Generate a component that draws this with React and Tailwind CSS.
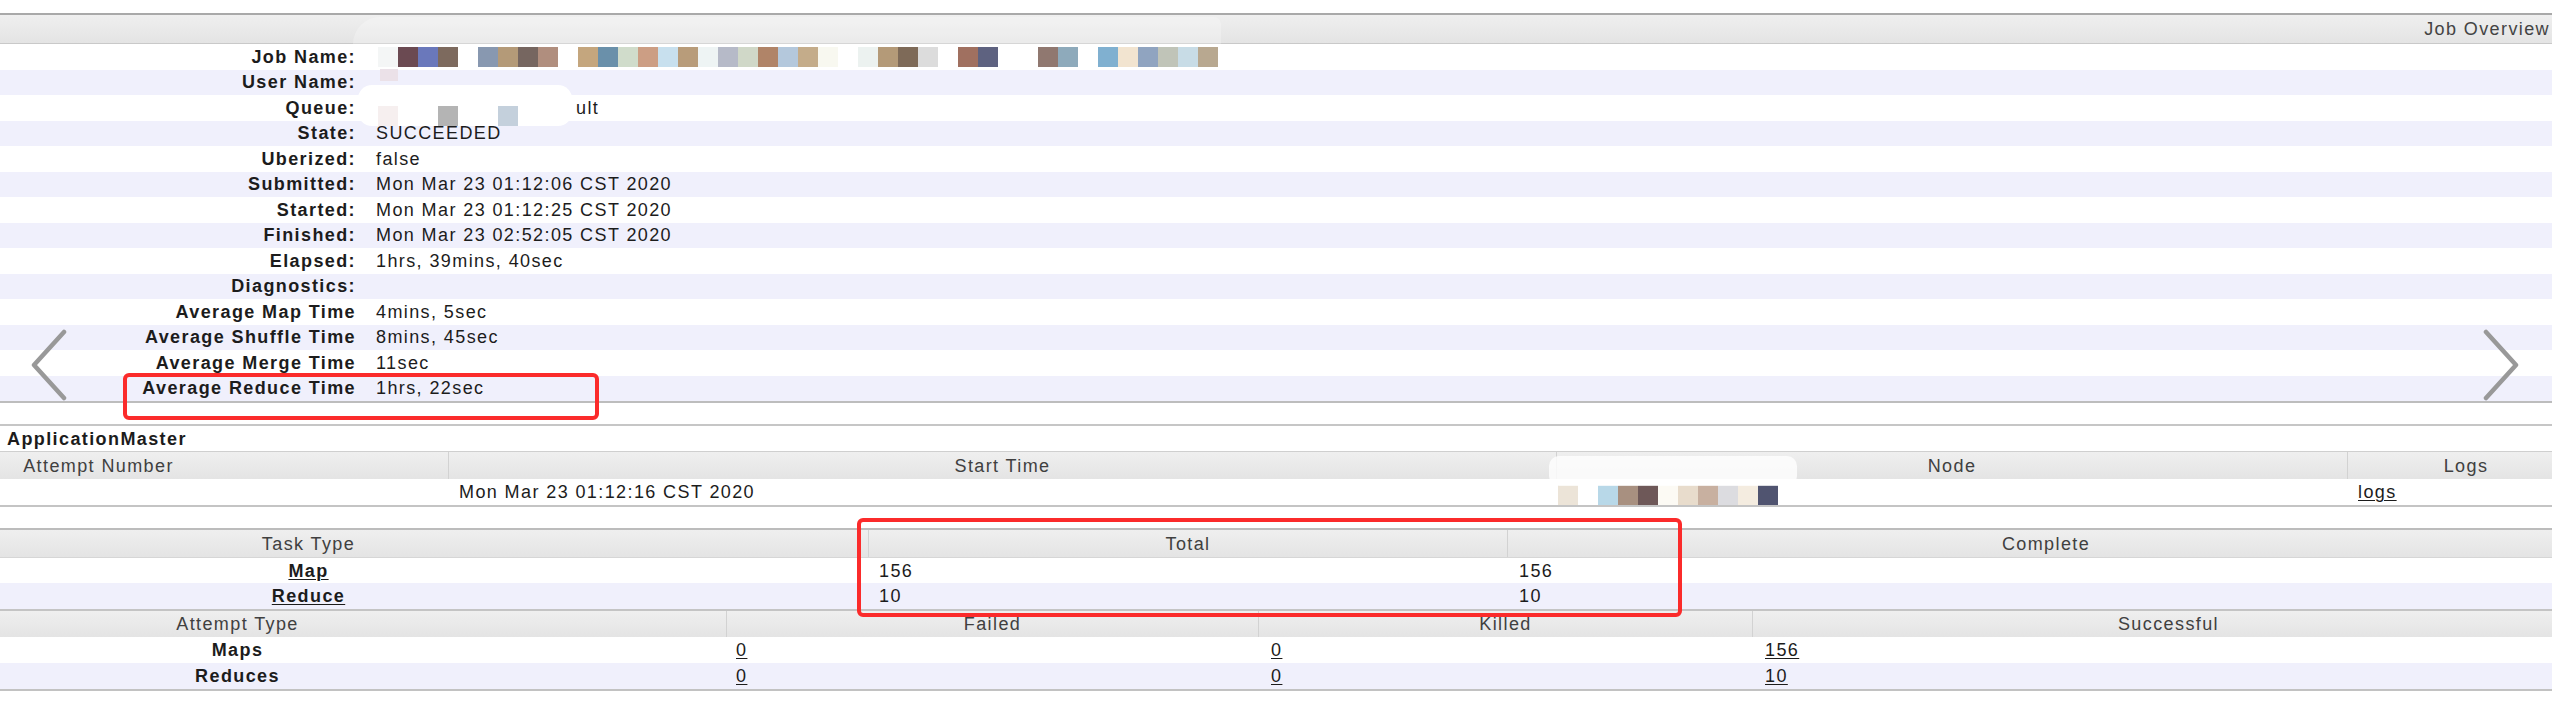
import React from "react"

const overview = [
  ["Job Name:", "job"],
  ["User Name:", ""],
  ["Queue:", "queue"],
  ["State:", "SUCCEEDED"],
  ["Uberized:", "false"],
  ["Submitted:", "Mon Mar 23 01:12:06 CST 2020"],
  ["Started:", "Mon Mar 23 01:12:25 CST 2020"],
  ["Finished:", "Mon Mar 23 02:52:05 CST 2020"],
  ["Elapsed:", "1hrs, 39mins, 40sec"],
  ["Diagnostics:", ""],
  ["Average Map Time", "4mins, 5sec"],
  ["Average Shuffle Time", "8mins, 45sec"],
  ["Average Merge Time", "11sec"],
  ["Average Reduce Time", "1hrs, 22sec"],
]

// pixelated (redacted) job name
const jobBlocks = [
  "#f4f6f6", "#6b4a52", "#6a78bb", "#7d6a5e", "#ffffff", "#8898b0", "#b49a78", "#766660",
  "#b08e7e", "#ffffff", "#c4a67e", "#6a90aa", "#d0dccb", "#cc9e84", "#c8e0ee", "#b89c7a",
  "#eef4f4", "#b6bac8", "#d0d8c8", "#b08468", "#b4c8dc", "#c4ac8a", "#f8f8f0", "#ffffff",
  "#ecf2f0", "#b49a78", "#7e6a58", "#dcdcdc", "#ffffff", "#a07060", "#5e6280", "#ffffff",
  "#ffffff", "#907870", "#8eaabb", "#ffffff", "#80b0d0", "#f2e4d0", "#90a4c0", "#c0c4b8",
  "#c8dce6", "#b8a890",
]

const nodeBlocks = [
  "#ece4d8", "#ffffff", "#b8d8e8", "#a89080", "#6e5858", "#fcfaf4", "#e8dccc", "#c8b0a0",
  "#dcdce0", "#f4ece0", "#505470",
]

const Blocks = ({ colors }) => (
  <div className="flex">
    {colors.map((c, i) => (
      <div key={i} className="w-[20px] h-[20px]" style={{ backgroundColor: c }} />
    ))}
  </div>
)

const HeadCell = ({ children }) => (
  <div className="flex items-center justify-center border-l border-[#d2d2d2] first:border-l-0">
    {children}
  </div>
)

const Link = ({ children, bold }) => (
  <span className={`underline underline-offset-2 decoration-1 ${bold ? "font-bold" : ""}`}>{children}</span>
)

const Chevron = ({ left }) => (
  <svg width="40" height="74" viewBox="0 0 40 74" fill="none" stroke="#999999" strokeWidth="4.5" strokeLinecap="round" strokeLinejoin="round">
    {left ? <polyline points="34,3 4,36 34,69" /> : <polyline points="6,3 36,36 6,69" />}
  </svg>
)

export default function App() {
  return (
    <div className="relative w-[2552px] h-[728px] overflow-hidden bg-white text-[18px] leading-[22px] tracking-[1.4px] text-[#1c1c1c] font-['Liberation_Sans',Arial,sans-serif]">
      <div className="ml-[-251px] w-[2835px] pt-[13px]">
        {/* Job Overview */}
        <div className="border-b-2 border-[#bdbdbd]">
          <div className="h-[31px] border-t-2 border-t-[#a9a9a9] border-b border-b-[#c9c9c9] bg-linear-to-b from-[#efefef] to-[#e4e4e4] flex items-center justify-end pr-[34px] text-[#444]">
            Job Overview
          </div>
          {overview.map(([label, value], i) => (
            <div key={label} className={`flex h-[25.5px] items-center ${i % 2 ? "bg-[#f0f0fc]" : "bg-white"}`}>
              <div className="w-[613px] shrink-0 pr-[6px] text-right font-bold">{label}</div>
              <div className="pl-[14px] flex items-center">
                {value === "job" ? (
                  <div className="ml-[2px]"><Blocks colors={jobBlocks} /></div>
                ) : value === "queue" ? (
                  <>
                    <span className="inline-block w-[200px]" />
                    <span>ult</span>
                  </>
                ) : (
                  value
                )}
              </div>
            </div>
          ))}
        </div>

        {/* ApplicationMaster */}
        <div className="mt-[21px] border-t-2 border-[#c6c6c6] border-b-2 border-b-[#c4c4c4]">
          <div className="h-[25px] flex items-center pl-[258px] font-bold">ApplicationMaster</div>
          <div className="grid grid-cols-[699px_1108px_791px_237px] h-[28px] border-t border-[#cfcfcf] bg-linear-to-b from-[#efefef] to-[#e4e4e4] text-[#404040]">
            <HeadCell>Attempt Number</HeadCell>
            <HeadCell>Start Time</HeadCell>
            <HeadCell>Node</HeadCell>
            <HeadCell>Logs</HeadCell>
          </div>
          <div className="grid grid-cols-[699px_1108px_791px_237px] h-[26px] bg-white">
            <div />
            <div className="flex items-center pl-[11px]">Mon Mar 23 01:12:16 CST 2020</div>
            <div className="flex items-end pl-[2px]"><Blocks colors={nodeBlocks} /></div>
            <div className="flex items-center pl-[11px]"><Link>logs</Link></div>
          </div>
        </div>

        {/* Tasks */}
        <div className="mt-[21px] border-t-2 border-[#bcbcbc] border-b-2 border-b-[#c2c2c2]">
          <div className="grid grid-cols-[1119px_639px_1077px] h-[27px] bg-linear-to-b from-[#efefef] to-[#e4e4e4] text-[#404040]">
            <HeadCell>Task Type</HeadCell>
            <HeadCell>Total</HeadCell>
            <HeadCell>Complete</HeadCell>
          </div>
          <div className="grid grid-cols-[1119px_639px_1077px] h-[26px] bg-white border-t border-[#d6d6d6]">
            <div className="flex items-center justify-center"><Link bold>Map</Link></div>
            <div className="flex items-center pl-[11px]">156</div>
            <div className="flex items-center pl-[12px]">156</div>
          </div>
          <div className="grid grid-cols-[1119px_639px_1077px] h-[26px] bg-[#f0f0fc]">
            <div className="flex items-center justify-center"><Link bold>Reduce</Link></div>
            <div className="flex items-center pl-[11px]">10</div>
            <div className="flex items-center pl-[12px]">10</div>
          </div>

          <div className="grid grid-cols-[977px_532px_494px_832px] h-[28px] border-t-2 border-[#c4c4c4] bg-linear-to-b from-[#efefef] to-[#e4e4e4] text-[#404040]">
            <HeadCell>Attempt Type</HeadCell>
            <HeadCell>Failed</HeadCell>
            <HeadCell>Killed</HeadCell>
            <HeadCell>Successful</HeadCell>
          </div>
          <div className="grid grid-cols-[977px_532px_494px_832px] h-[26px] bg-white">
            <div className="flex items-center justify-center font-bold">Maps</div>
            <div className="flex items-center pl-[10px]"><Link>0</Link></div>
            <div className="flex items-center pl-[13px]"><Link>0</Link></div>
            <div className="flex items-center pl-[13px]"><Link>156</Link></div>
          </div>
          <div className="grid grid-cols-[977px_532px_494px_832px] h-[26px] bg-[#f0f0fc]">
            <div className="flex items-center justify-center font-bold">Reduces</div>
            <div className="flex items-center pl-[10px]"><Link>0</Link></div>
            <div className="flex items-center pl-[13px]"><Link>0</Link></div>
            <div className="flex items-center pl-[13px]"><Link>10</Link></div>
          </div>
        </div>
      </div>

      {/* redaction smears */}
      <div className="absolute left-[353px] top-[17px] w-[868px] h-[27px] rounded-tl-[30px] rounded-tr-[8px] bg-white/25" />
      <div className="absolute left-[380px] top-[69px] w-[18px] h-[12px] bg-[#ebe1e8]" />
      <div className="absolute left-[358px] top-[85px] w-[214px] h-[41px] rounded-[14px] bg-white">
        <div className="flex gap-[40px] pl-[20px] pt-[21px]">
          <div className="w-[20px] h-[20px] bg-[#f6efef]" />
          <div className="w-[20px] h-[20px] bg-[#b4b4b4]" />
          <div className="w-[20px] h-[20px] bg-[#c4d0dc]" />
        </div>
      </div>
      <div className="absolute left-[1549px] top-[456px] w-[248px] h-[30px] rounded-[10px] bg-white/80" />

      {/* carousel arrows */}
      <div className="absolute left-[30px] top-[329px]"><Chevron left /></div>
      <div className="absolute left-[2480px] top-[329px]"><Chevron /></div>

      {/* annotation boxes */}
      <div className="absolute left-[123px] top-[373px] w-[476px] h-[47px] rounded-[6px] border-4 border-[#fb2b2b]" />
      <div className="absolute left-[857px] top-[518px] w-[825px] h-[99px] rounded-[6px] border-4 border-[#fb2b2b]" />
    </div>
  )
}
